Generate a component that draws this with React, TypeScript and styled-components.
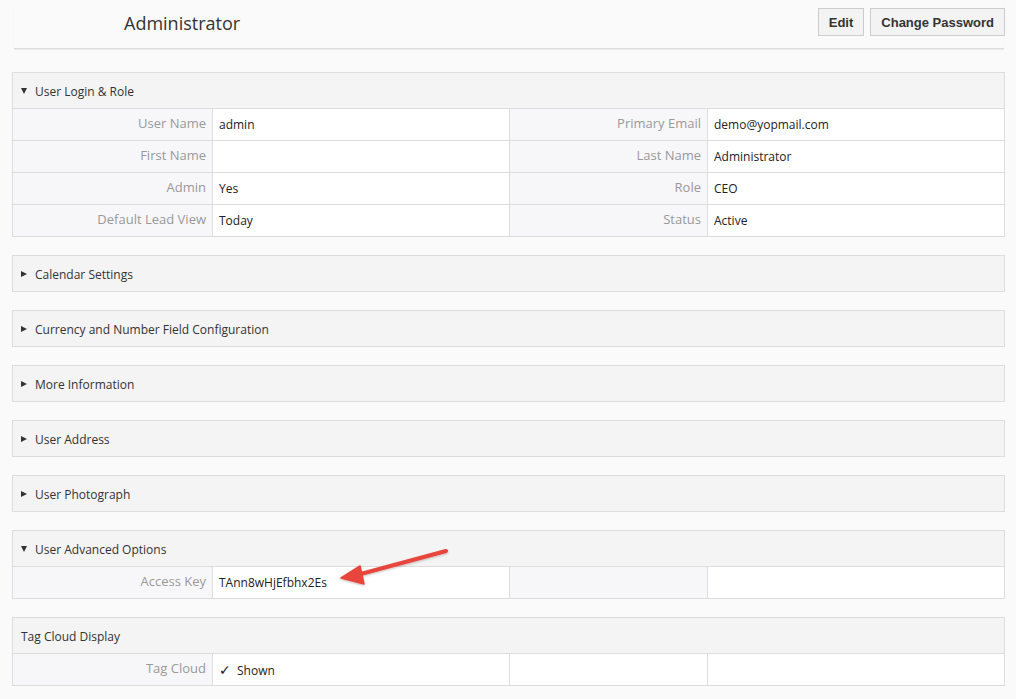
import React from "react";
import styled, { createGlobalStyle } from "styled-components";

const Global = createGlobalStyle`
  html, body { margin: 0; padding: 0; background: #fafafa; }
  body { font-family: "Open Sans", "Liberation Sans", sans-serif; font-size: 13px; color: #333; }
  * { box-sizing: border-box; }
`;

const Page = styled.div`
  position: relative;
  padding: 0 11px 30px 12px;
`;

const TopBar = styled.div`
  height: 49px;
  display: flex;
  align-items: flex-start;
  justify-content: space-between;
  margin: 0 1px 0 2px;
  border-bottom: 1px solid #dcdcdc;
  box-shadow: 0 1px 1px rgba(0, 0, 0, 0.06);
`;

const Title = styled.h1`
  margin: 0;
  padding: 10px 0 0 110px;
  font-size: 18px;
  font-weight: 400;
  line-height: 26px;
  color: #333;
`;

const Buttons = styled.div`
  display: flex;
  gap: 6px;
  padding-top: 8px;
  margin-right: -1px;
`;

const Button = styled.button`
  height: 28px;
  padding: 0 10px;
  font-family: "Liberation Sans", Arial, sans-serif;
  font-size: 13px;
  font-weight: 700;
  color: #333;
  background: #f3f3f3;
  border: 1px solid #ccc;
  border-radius: 0;
`;

const Blocks = styled.div`
  display: flex;
  flex-direction: column;
  gap: 18px;
  margin-top: 23px;
`;

const Block = styled.section`
  border: 1px solid #ddd;
  background: #fff;
`;

const BlockHeader = styled.div`
  height: 35px;
  display: flex;
  align-items: center;
  gap: 7px;
  padding: 2px 0 0 8px;
  background: #f4f4f4;
  color: #333;
  font-size: 12px;
`;

const Caret = styled.span<{ $open: boolean }>`
  width: 0;
  height: 0;
  border-style: solid;
  ${(p) =>
    p.$open
      ? `border-width: 6px 3.5px 0 3.5px; border-color: #333 transparent transparent transparent;`
      : `border-width: 3.5px 0 3.5px 6px; border-color: transparent transparent transparent #333;`}
  margin: -1px 1px 0 0;
`;

const Grid = styled.div`
  display: grid;
  grid-template-columns: 199px 297px 198px 1fr;
`;

const LabelCell = styled.div<{ $first?: boolean }>`
  height: 32px;
  border-top: 1px solid #ddd;
  border-left: ${(p) => (p.$first ? "none" : "1px solid #ddd")};
  background: #f7f7f9;
  color: #999;
  text-align: right;
  padding: 5px 6px 0 6px;
  line-height: 18px;
  font-size: 13px;
`;

const Value = styled.div`
  height: 32px;
  border-top: 1px solid #ddd;
  border-left: 1px solid #ddd;
  background: #fff;
  color: #222;
  padding: 7px 6px 0 6px;
  line-height: 18px;
  font-size: 12px;
`;

const Check = styled.span`
  display: inline-block;
  width: 18px;
  font-family: "DejaVu Sans", sans-serif;
  font-size: 14px;
  font-weight: 700;
  color: #222;
`;

const Arrow = styled.svg`
  position: absolute;
  left: 330px;
  top: 540px;
  overflow: visible;
`;

type Field = [string, React.ReactNode];

const Row: React.FC<{ left: Field; right: Field }> = ({ left, right }) => (
  <>
    <LabelCell $first>{left[0]}</LabelCell>
    <Value>{left[1]}</Value>
    <LabelCell>{right[0]}</LabelCell>
    <Value>{right[1]}</Value>
  </>
);

const Collapsed: React.FC<{ title: string }> = ({ title }) => (
  <Block>
    <BlockHeader>
      <Caret $open={false} />
      {title}
    </BlockHeader>
  </Block>
);

export default function App() {
  return (
    <>
      <Global />
      <Page>
        <TopBar>
          <Title>Administrator</Title>
          <Buttons>
            <Button>Edit</Button>
            <Button>Change Password</Button>
          </Buttons>
        </TopBar>
        <Blocks>
          <Block>
            <BlockHeader>
              <Caret $open />
              User Login &amp; Role
            </BlockHeader>
            <Grid>
              <Row left={["User Name", "admin"]} right={["Primary Email", "demo@yopmail.com"]} />
              <Row left={["First Name", ""]} right={["Last Name", "Administrator"]} />
              <Row left={["Admin", "Yes"]} right={["Role", "CEO"]} />
              <Row left={["Default Lead View", "Today"]} right={["Status", "Active"]} />
            </Grid>
          </Block>
          <Collapsed title="Calendar Settings" />
          <Collapsed title="Currency and Number Field Configuration" />
          <Collapsed title="More Information" />
          <Collapsed title="User Address" />
          <Collapsed title="User Photograph" />
          <Block>
            <BlockHeader>
              <Caret $open />
              User Advanced Options
            </BlockHeader>
            <Grid>
              <Row left={["Access Key", "TAnn8wHjEfbhx2Es"]} right={["", ""]} />
            </Grid>
          </Block>
          <Block>
            <BlockHeader>Tag Cloud Display</BlockHeader>
            <Grid>
              <LabelCell $first>Tag Cloud</LabelCell>
              <Value>
                <Check>✓</Check>Shown
              </Value>
              <Value />
              <Value />
            </Grid>
          </Block>
        </Blocks>
        <Arrow width="130" height="50" viewBox="0 0 130 50">
          <defs>
            <filter id="sh" x="-20%" y="-50%" width="140%" height="200%">
              <feDropShadow dx="0" dy="1" stdDeviation="1" floodColor="#000" floodOpacity="0.25" />
            </filter>
          </defs>
          <g filter="url(#sh)" fill="#e8453c" stroke="#e8453c">
            <line x1="116" y1="11" x2="27" y2="35" strokeWidth="4" strokeLinecap="round" />
            <polygon points="11,38 30,26 34,44" strokeWidth="1.5" strokeLinejoin="round" />
          </g>
        </Arrow>
      </Page>
    </>
  );
}
